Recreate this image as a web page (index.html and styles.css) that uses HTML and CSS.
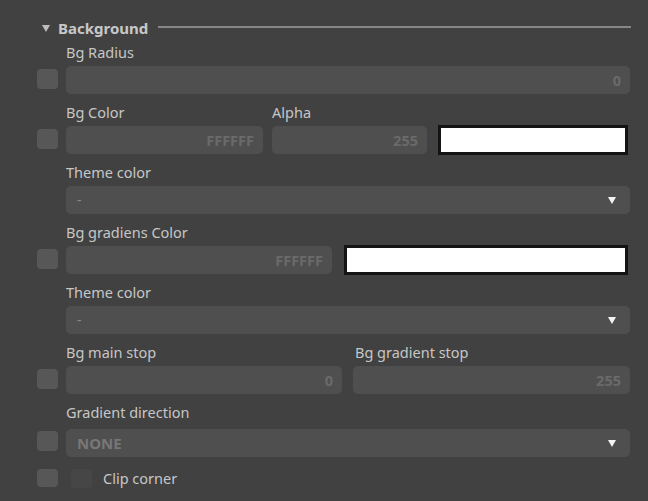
FILE: index.html
```html
<!DOCTYPE html>
<html>
<head>
<meta charset="utf-8">
<link rel="stylesheet" href="styles.css">
</head>
<body>
<div class="panel">
  <div class="section-head">
    <span class="caret"></span>
    <span class="section-title">Background</span>
    <span class="section-line"></span>
  </div>

  <div class="row">
    <div class="labels"><span class="label">Bg Radius</span></div>
    <span class="check"></span>
    <div class="fields">
      <div class="input"><span class="value">0</span></div>
    </div>
  </div>

  <div class="row">
    <div class="labels cols-color"><span class="label">Bg Color</span><span class="label">Alpha</span></div>
    <span class="check"></span>
    <div class="fields cols-color">
      <div class="input"><span class="value">FFFFFF</span></div>
      <div class="input"><span class="value">255</span></div>
      <div class="swatch"></div>
    </div>
  </div>

  <div class="row">
    <div class="labels"><span class="label">Theme color</span></div>
    <span class="nocheck"></span>
    <div class="fields">
      <div class="input select"><span class="opt">-</span><span class="arrow"></span></div>
    </div>
  </div>

  <div class="row">
    <div class="labels"><span class="label">Bg gradiens Color</span></div>
    <span class="check"></span>
    <div class="fields cols-grad">
      <div class="input"><span class="value">FFFFFF</span></div>
      <div class="swatch"></div>
    </div>
  </div>

  <div class="row">
    <div class="labels"><span class="label">Theme color</span></div>
    <span class="nocheck"></span>
    <div class="fields">
      <div class="input select"><span class="opt">-</span><span class="arrow"></span></div>
    </div>
  </div>

  <div class="row">
    <div class="labels cols-stop"><span class="label">Bg main stop</span><span class="label label-shift">Bg gradient stop</span></div>
    <span class="check"></span>
    <div class="fields cols-stop">
      <div class="input"><span class="value">0</span></div>
      <div class="input"><span class="value">255</span></div>
    </div>
  </div>

  <div class="row row-dir">
    <div class="labels"><span class="label">Gradient direction</span></div>
    <span class="check"></span>
    <div class="fields">
      <div class="input select"><span class="opt opt-bold">NONE</span><span class="arrow"></span></div>
    </div>
  </div>

  <div class="row-clip">
    <span class="check"></span>
    <div class="clip">
      <span class="clip-box"></span>
      <span class="label">Clip corner</span>
    </div>
  </div>
</div>
</body>
</html>
```

FILE: styles.css
```css
html, body {
  margin: 0;
  padding: 0;
  background: #414141;
}

body {
  font-family: "Noto Sans", "Open Sans", sans-serif;
  font-size: 14.5px;
  line-height: 20px;
  color: #c6c6c6;
  width: 648px;
  height: 501px;
  overflow: hidden;
}

.panel {
  padding: 18px 18px 0 37px;
}

.section-head {
  display: flex;
  align-items: center;
  height: 20px;
  margin-bottom: 6px;
}

.caret {
  width: 0;
  height: 0;
  margin-left: 5px;
  margin-right: 8px;
  border-left: 4px solid transparent;
  border-right: 4px solid transparent;
  border-top: 7px solid #bdbdbd;
  margin-top: 1px;
}

.section-title {
  font-weight: 700;
  font-size: 15px;
  line-height: 20px;
  color: #c8c8c8;
}

.section-line {
  flex: 1;
  height: 2px;
  background: #878787;
  margin-left: 10px;
  margin-right: -1px;
  margin-top: -2px;
}

.row {
  display: grid;
  grid-template-columns: 21px 1fr;
  grid-template-rows: 20px 30px;
  column-gap: 8px;
  margin-bottom: 10px;
}

.labels {
  grid-column: 2;
  grid-row: 1;
  height: 20px;
  font-size: 14.5px;
  line-height: 17px;
}

.label {
  font-size: 14.5px;
  color: #c6c6c6;
  white-space: nowrap;
}

.check {
  grid-column: 1;
  grid-row: 2;
  align-self: center;
  width: 21px;
  height: 20px;
  border-radius: 4px;
  background: #575757;
}

.nocheck {
  grid-column: 1;
  grid-row: 2;
}

.fields {
  grid-column: 2;
  grid-row: 2;
  height: 30px;
  padding-top: 2px;
  box-sizing: border-box;
  display: grid;
  grid-template-columns: 1fr;
  align-items: start;
}

.cols-color {
  display: grid;
  grid-template-columns: 197px 155px 1fr;
  column-gap: 9px;
}

.cols-grad {
  display: grid;
  grid-template-columns: 266px 1fr;
  column-gap: 10px;
}

.cols-stop {
  display: grid;
  grid-template-columns: 276px 1fr;
  column-gap: 11px;
}

.label-shift {
  padding-left: 2px;
}

.input {
  height: 28px;
  border-radius: 5px;
  background: #4f4f4f;
  display: flex;
  align-items: center;
  justify-content: flex-end;
  padding: 0 9px 0 11px;
  box-sizing: border-box;
}

.value {
  font-weight: 700;
  font-size: 14.5px;
  color: #6a6a6a;
  line-height: 20px;
}

.swatch {
  height: 30px;
  margin: -1px 2px 0;
  box-sizing: border-box;
  border: 3px solid #141414;
  background: #ffffff;
}

.select {
  justify-content: space-between;
  padding: 0 14px 0 11px;
}

.opt {
  font-size: 14px;
  color: #8a8a8a;
  line-height: 20px;
}

.opt-bold {
  font-weight: 700;
  font-size: 15px;
  color: #777777;
}

.arrow {
  width: 0;
  height: 0;
  border-left: 4.5px solid transparent;
  border-right: 4.5px solid transparent;
  border-top: 7px solid #f4f4f4;
  margin-top: 1px;
}

.row-dir {
  grid-template-rows: 20px 33px;
  margin-bottom: 11px;
}

.row-dir .fields {
  height: 33px;
  padding-top: 5px;
}

.row-dir .check {
  align-self: start;
  margin-top: 7px;
}

.row-clip {
  display: grid;
  grid-template-columns: 21px 1fr;
  column-gap: 8px;
  align-items: center;
}

.row-clip .check {
  grid-row: 1;
  height: 18px;
}

.clip {
  display: flex;
  align-items: center;
  height: 20px;
}

.clip-box {
  width: 21px;
  height: 19px;
  margin-left: 5px;
  margin-right: 11px;
  border-radius: 4px;
  background: #464646;
}
```
